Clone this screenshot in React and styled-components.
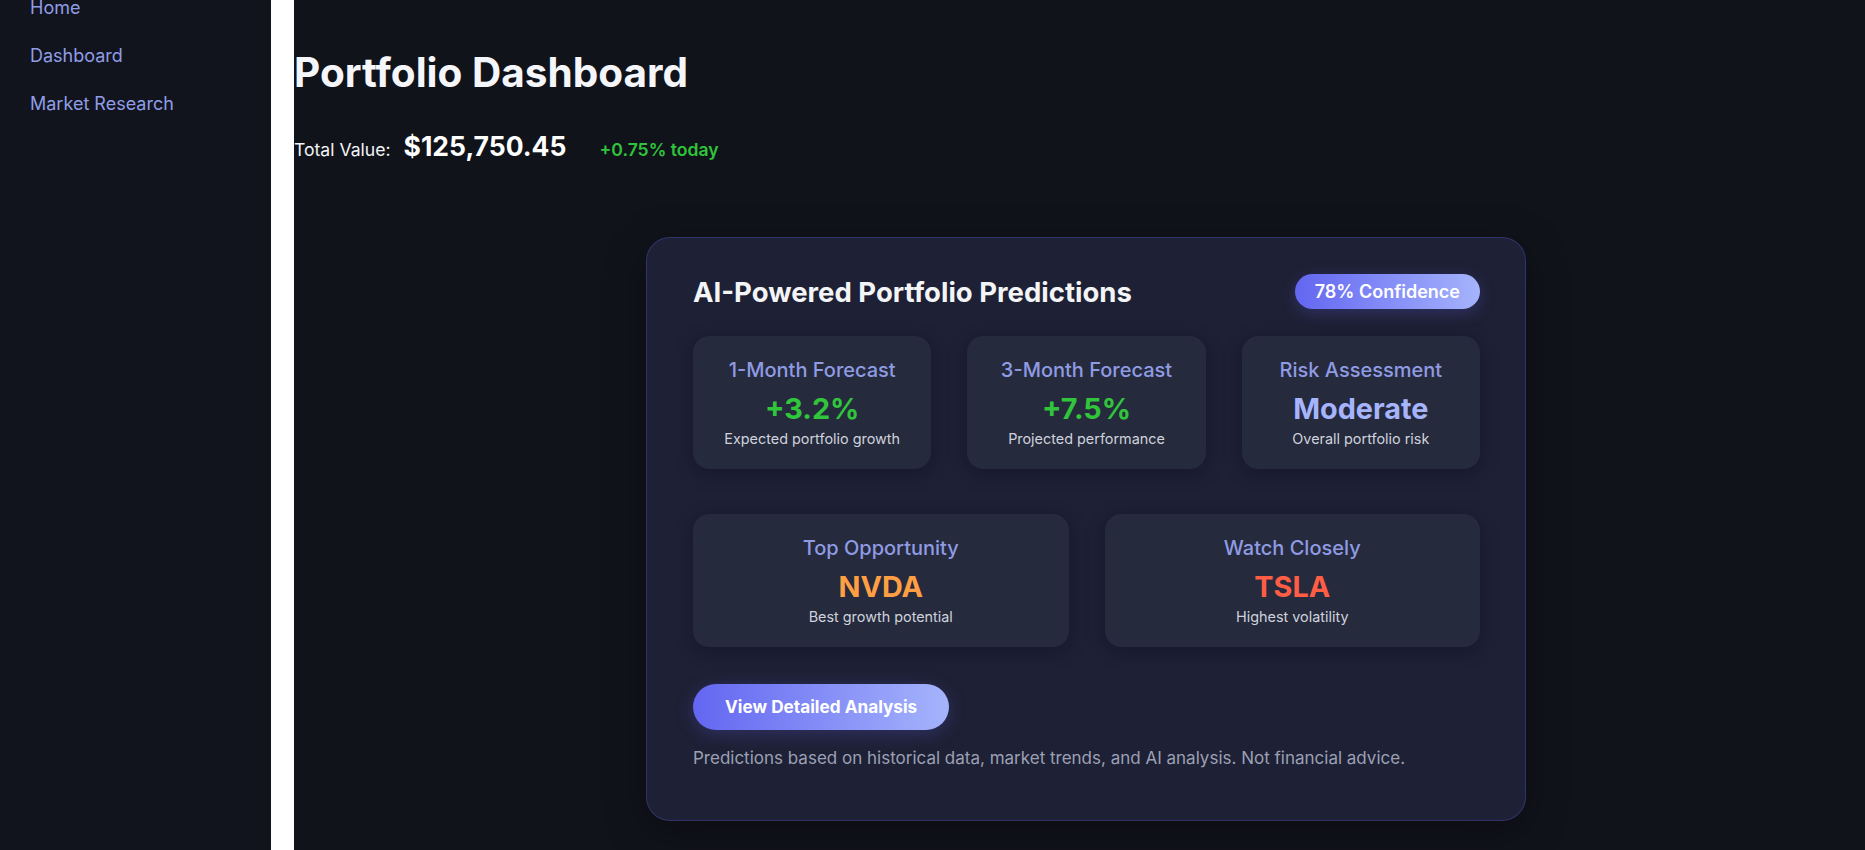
import React from "react";
import styled, { createGlobalStyle } from "styled-components";

const GlobalStyle = createGlobalStyle`
  html, body {
    margin: 0;
    padding: 0;
    background: #11131b;
    font-family: Inter, "Noto Sans", sans-serif;
    overflow: hidden;
  }
  * {
    box-sizing: border-box;
  }
`;

const forecasts = [
  { title: "1-Month Forecast", value: "+3.2%", note: "Expected portfolio growth", tone: "#31c53c" },
  { title: "3-Month Forecast", value: "+7.5%", note: "Projected performance", tone: "#31c53c" },
  { title: "Risk Assessment", value: "Moderate", note: "Overall portfolio risk", tone: "#a5b4fc" },
];

const picks = [
  { title: "Top Opportunity", value: "NVDA", note: "Best growth potential", tone: "#ff9f43" },
  { title: "Watch Closely", value: "TSLA", note: "Highest volatility", tone: "#ff5e45" },
];

const App = () => {
  return (
    <Layout>
      <GlobalStyle />
      <Sidebar>
        <Nav>
          <NavLink href="#">Home</NavLink>
          <NavLink href="#">Dashboard</NavLink>
          <NavLink href="#">Market Research</NavLink>
        </Nav>
      </Sidebar>
      <Divider />
      <Main>
        <Title>Portfolio Dashboard</Title>
        <TotalRow>
          <TotalLabel>Total Value:</TotalLabel>
          <TotalValue>$125,750.45</TotalValue>
          <Change>+0.75% today</Change>
        </TotalRow>

        <CardWrap>
          <Card>
            <CardHeader>
              <h2>AI-Powered Portfolio Predictions</h2>
              <Badge>78% Confidence</Badge>
            </CardHeader>

            <Grid $cols={3}>
              {forecasts.map((f) => (
                <Stat key={f.title}>
                  <StatTitle>{f.title}</StatTitle>
                  <StatValue $tone={f.tone}>{f.value}</StatValue>
                  <StatNote>{f.note}</StatNote>
                </Stat>
              ))}
            </Grid>

            <Grid $cols={2} $top={45}>
              {picks.map((p) => (
                <Stat key={p.title}>
                  <StatTitle>{p.title}</StatTitle>
                  <StatValue $tone={p.tone}>{p.value}</StatValue>
                  <StatNote>{p.note}</StatNote>
                </Stat>
              ))}
            </Grid>

            <Button>View Detailed Analysis</Button>
            <Disclaimer>
              Predictions based on historical data, market trends, and AI
              analysis. Not financial advice.
            </Disclaimer>
          </Card>
        </CardWrap>
      </Main>
    </Layout>
  );
};

const Layout = styled.div`
  display: flex;
  width: 100%;
  height: 850px;
  overflow: hidden;
  background: #11131b;
`;

const Sidebar = styled.aside`
  width: 271px;
  flex-shrink: 0;
  background: #12141d;
  padding: 0 30px;
`;

const Nav = styled.nav`
  display: flex;
  flex-direction: column;
  margin-top: -16px;
`;

const NavLink = styled.a`
  display: block;
  padding: 12px 0;
  line-height: 24px;
  font-size: 18px;
  color: #8f9de6;
  text-decoration: none;
`;

const Divider = styled.div`
  width: 23px;
  flex-shrink: 0;
  background: #ffffff;
`;

const Main = styled.main`
  flex: 1;
  min-width: 0;
  padding-top: 49px;
  color: #f3f4f6;
`;

const Title = styled.h1`
  margin: 0;
  font-size: 40.5px;
  line-height: 48px;
  font-weight: 700;
  color: #f5f6fa;
`;

const TotalRow = styled.div`
  display: flex;
  align-items: baseline;
  margin-top: 33px;
`;

const TotalLabel = styled.span`
  font-size: 17.6px;
  color: #f3f4f6;
  margin-right: 13px;
`;

const TotalValue = styled.span`
  font-size: 26.5px;
  font-weight: 700;
  color: #ffffff;
`;

const Change = styled.span`
  margin-left: 33px;
  font-size: 17.6px;
  font-weight: 600;
  color: #2fc43a;
`;

const CardWrap = styled.div`
  display: flex;
  justify-content: center;
  padding-left: 13px;
  margin-top: 75px;
`;

const Card = styled.section`
  width: 880px;
  background: #1e2035;
  border: 1px solid rgba(99, 102, 241, 0.28);
  border-radius: 24px;
  padding: 36px 45px 36px 46px;
  box-shadow: 0 10px 40px rgba(0, 0, 0, 0.35);
`;

const CardHeader = styled.div`
  display: flex;
  align-items: center;
  justify-content: space-between;
  margin-bottom: 27px;
  h2 {
    margin: 0;
    font-size: 27.5px;
    font-weight: 700;
    color: #f3f4f6;
  }
`;

const Badge = styled.span`
  padding: 8px 20px;
  border-radius: 999px;
  font-size: 18px;
  line-height: 19px;
  font-weight: 600;
  color: #ffffff;
  background: linear-gradient(90deg, #6366f1, #a5b4fc);
  box-shadow: 0 4px 16px rgba(99, 102, 241, 0.25);
`;

const Grid = styled.div`
  display: grid;
  grid-template-columns: repeat(${(p) => p.$cols}, 1fr);
  gap: 36px;
  margin-top: ${(p) => p.$top || 0}px;
`;

const Stat = styled.div`
  background: #252a3d;
  border-radius: 16px;
  padding: 22px 16px 22px;
  text-align: center;
  box-shadow: 0 4px 18px rgba(10, 10, 30, 0.35);
`;

const StatTitle = styled.div`
  font-size: 20px;
  font-weight: 500;
  color: #8f9be2;
`;

const StatValue = styled.div`
  margin-top: 9px;
  font-size: 28.8px;
  font-weight: 700;
  color: ${(p) => p.$tone};
`;

const StatNote = styled.div`
  margin-top: 4px;
  font-size: 14.4px;
  color: #cfd2dc;
`;

const Button = styled.button`
  display: block;
  margin-top: 37px;
  padding: 13px 32px;
  border: none;
  border-radius: 999px;
  font-family: inherit;
  font-size: 17.2px;
  line-height: 20px;
  font-weight: 700;
  color: #ffffff;
  background: linear-gradient(90deg, #6366f1, #a5b4fc);
  box-shadow: 0 4px 18px rgba(99, 102, 241, 0.25);
  cursor: pointer;
`;

const Disclaimer = styled.p`
  margin: 15px 0 12px;
  font-size: 17px;
  line-height: 27px;
  color: #9ca0b4;
`;

export default App;
